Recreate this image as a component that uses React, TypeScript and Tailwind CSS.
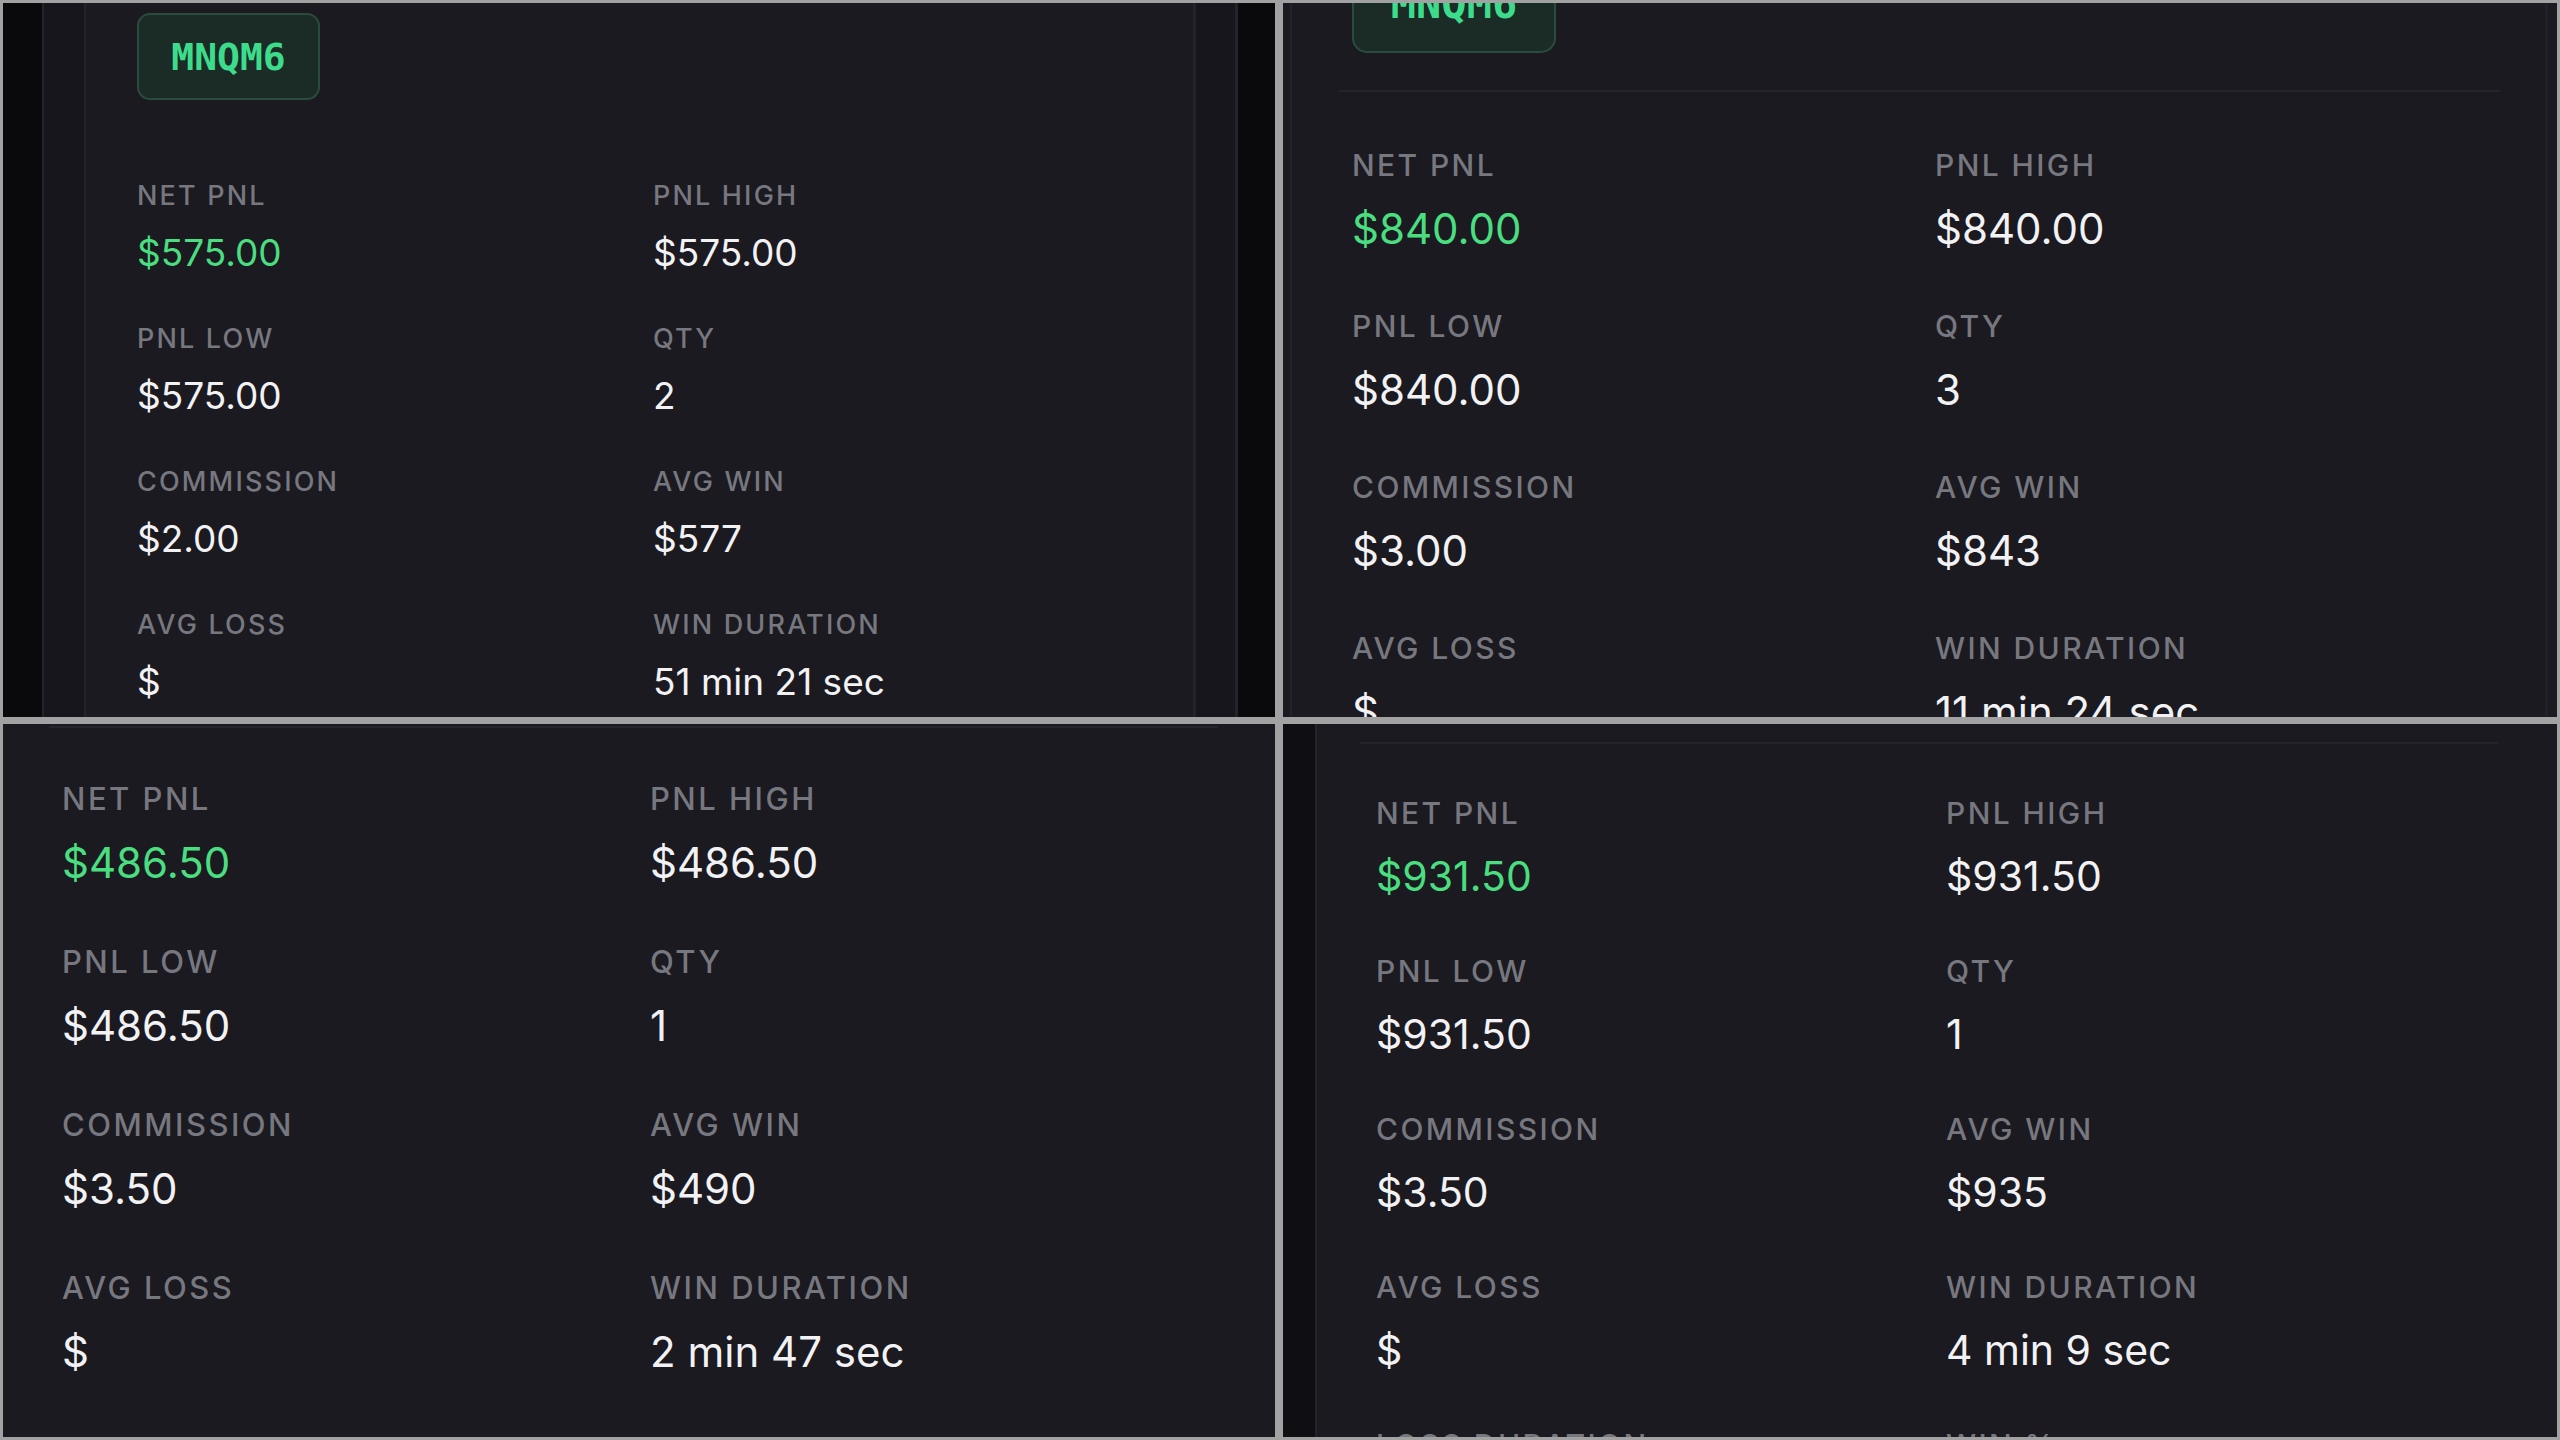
import React from "react";

type Item = { label: string; value: string; green?: boolean };

type Cfg = {
  label: string;
  value: string;
  grid: string;
};

const mk = (net: string, qty: string, comm: string, win: string, dur: string): Item[] => [
  { label: "NET PNL", value: net, green: true },
  { label: "PNL HIGH", value: net },
  { label: "PNL LOW", value: net },
  { label: "QTY", value: qty },
  { label: "COMMISSION", value: comm },
  { label: "AVG WIN", value: win },
  { label: "AVG LOSS", value: "$" },
  { label: "WIN DURATION", value: dur },
  { label: "LOSS DURATION", value: "—" },
  { label: "WIN %", value: "100%" },
];

function Stats({ items, cfg }: { items: Item[]; cfg: Cfg }) {
  return (
    <div className={cfg.grid}>
      {items.map((it) => (
        <div key={it.label} className="flex flex-col">
          <div className={`${cfg.label} font-medium tracking-[0.08em] text-[#77777f] whitespace-nowrap`}>{it.label}</div>
          <div className={`${cfg.value} font-normal whitespace-nowrap ${it.green ? "text-[#4ade80]" : "text-[#f2f2f4]"}`}>
            {it.value}
          </div>
        </div>
      ))}
    </div>
  );
}

const tl: Cfg = {
  label: "text-[27px] leading-[32px] mb-[19px]",
  value: "text-[37px] leading-[44px]",
  grid: "grid grid-cols-[516px_1fr] gap-y-[48px] mt-[80px]",
};
const tr: Cfg = {
  label: "text-[30px] leading-[36px] mb-[21px]",
  value: "text-[42px] leading-[50px]",
  grid: "grid grid-cols-[583px_1fr] gap-y-[54px] mt-[55px] ml-[60px]",
};
const bl: Cfg = {
  label: "text-[31px] leading-[37px] mb-[21px]",
  value: "text-[42px] leading-[50px]",
  grid: "grid grid-cols-[588px_1fr] gap-y-[55px] mt-[52px] ml-[59px]",
};
const br: Cfg = {
  label: "text-[30px] leading-[36px] mb-[21px]",
  value: "text-[41px] leading-[49px]",
  grid: "grid grid-cols-[570px_1fr] gap-y-[52px] mt-[51px] ml-[59px]",
};

export default function App() {
  return (
    <div className="w-[2560px] h-[1440px] bg-[#a2a2a2] p-[3px] grid grid-cols-[1272px_1274px] grid-rows-[714px_713px] gap-x-[8px] gap-y-[7px] overflow-hidden [font-family:Inter,'Noto_Sans',sans-serif]">
      {/* Top-left */}
      <div className="flex flex-row overflow-hidden">
        <div className="w-[39px] shrink-0 bg-[#0a0a0d]" />
        <div className="w-[2px] shrink-0 bg-[#23232a]" />
        <div className="w-[40px] shrink-0 bg-[#16161c]" />
        <div className="w-[2px] shrink-0 bg-[#23232a]" />
        <div className="flex-1 bg-[#1a1a20] pl-[51px] pt-[10px]">
          <div className="w-[183px] h-[87px] rounded-[13px] border-2 border-[#2a4c3e] bg-[#1b2b25] flex items-center justify-center">
            <span className="[font-family:'DejaVu_Sans_Mono',monospace] font-bold text-[38px] leading-none text-[#3ddc8c]">MNQM6</span>
          </div>
          <Stats items={mk("$575.00", "2", "$2.00", "$577", "51 min 21 sec")} cfg={tl} />
        </div>
        <div className="w-[3px] shrink-0 bg-[#23232a]" />
        <div className="w-[39px] shrink-0 bg-[#16161c]" />
        <div className="w-[3px] shrink-0 bg-[#23232a]" />
        <div className="w-[37px] shrink-0 bg-[#0a0a0d]" />
      </div>

      {/* Top-right */}
      <div className="flex flex-row overflow-hidden">
        <div className="w-[7px] shrink-0 bg-[#1a1a20]" />
        <div className="w-[2px] shrink-0 bg-[#22222a]" />
        <div className="flex-1 bg-[#1a1a20] flex flex-col">
          <div className="ml-[60px] mt-[-48px] w-[204px] h-[98px] rounded-[15px] border-2 border-[#2a4c3e] bg-[#1b2b25] flex items-center justify-center shrink-0">
            <span className="[font-family:'DejaVu_Sans_Mono',monospace] font-bold text-[42px] leading-none text-[#3ddc8c]">MNQM6</span>
          </div>
          <div className="ml-[47px] mt-[37px] w-[1161px] h-[2px] bg-[#24242b] shrink-0" />
          <Stats items={mk("$840.00", "3", "$3.00", "$843", "11 min 24 sec")} cfg={tr} />
        </div>
        <div className="w-[3px] shrink-0 bg-[#202027]" />
        <div className="w-[9px] shrink-0 bg-[#1a1a20]" />
      </div>

      {/* Bottom-left */}
      <div className="flex flex-col overflow-hidden bg-[#1a1a20]">
        <div className="ml-[46px] mt-[2px] w-[1169px] h-[2px] bg-[#24242b] shrink-0" />
        <Stats items={mk("$486.50", "1", "$3.50", "$490", "2 min 47 sec")} cfg={bl} />
      </div>

      {/* Bottom-right */}
      <div className="flex flex-row overflow-hidden">
        <div className="w-[32px] shrink-0 bg-[#0f0f13]" />
        <div className="w-[2px] shrink-0 bg-[#23232a]" />
        <div className="flex-1 bg-[#1a1a20] flex flex-col">
          <div className="ml-[43px] mt-[18px] w-[1138px] h-[2px] bg-[#24242b] shrink-0" />
          <Stats items={mk("$931.50", "1", "$3.50", "$935", "4 min 9 sec")} cfg={br} />
        </div>
      </div>
    </div>
  );
}
